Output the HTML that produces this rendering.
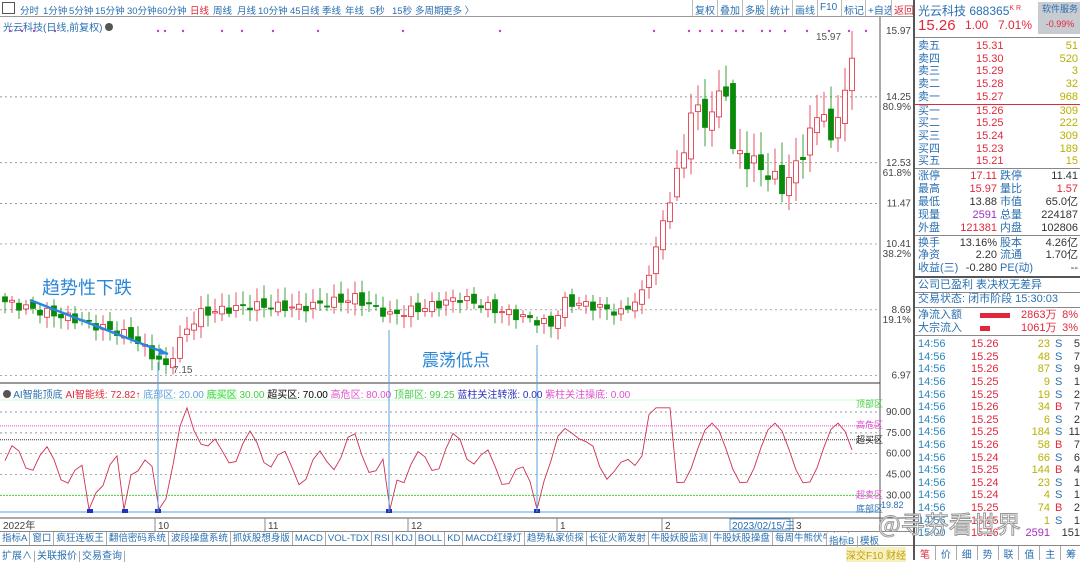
<!DOCTYPE html>
<html><head><meta charset="utf-8"><style>
*{margin:0;padding:0;box-sizing:border-box}
body{width:1080px;height:560px;overflow:hidden;background:#fff;font-family:"Liberation Sans","Noto Sans CJK SC",sans-serif;font-size:11px;position:relative}
.abs{position:absolute;white-space:nowrap}
#tb{position:absolute;left:0;top:0;width:913px;height:17px;border-bottom:1px solid #999;background:#fff;overflow:hidden}
#tb span{position:absolute;top:3px;color:#2a6fb0;font-size:9.5px}
.btn{position:absolute;top:0;height:17px;border-left:1px solid #bbb;color:#2a6fb0;font-size:10px;padding:2px 2px;white-space:nowrap}
#rp{position:absolute;left:913px;top:0;width:167px;height:560px;border-left:2px solid #555;font-size:11px}
.r{position:absolute;left:3px;right:0;height:13px;line-height:13px;white-space:nowrap}
.r b{font-weight:normal;position:absolute}
.hl{position:absolute;left:0;right:0;height:1px;background:#888}
#bt{position:absolute;left:0;top:531px;width:913px;height:15px;border-top:1px solid #888;border-bottom:1px solid #888;white-space:nowrap;overflow:hidden}
#bt span{display:inline-block;height:13px;line-height:13px;padding:0 2px;border-right:1px solid #aaa;color:#2a6fb0;font-size:9.5px}
</style></head><body>
<div id="tb">
<div style="position:absolute;left:2px;top:2px;width:13px;height:12px;border:1px solid #555"></div>
<span style="left:20px">分时</span><span style="left:43px">1分钟</span><span style="left:69px">5分钟</span><span style="left:95px">15分钟</span><span style="left:127px">30分钟</span><span style="left:157px">60分钟</span><span style="left:190px;color:#e0283c">日线</span><span style="left:213px">周线</span><span style="left:237px">月线</span><span style="left:258px">10分钟</span><span style="left:290px">45日线</span><span style="left:322px">季线</span><span style="left:345px">年线</span><span style="left:370px">5秒</span><span style="left:392px">15秒</span><span style="left:415px">多周期</span><span style="left:443px">更多 〉</span>
<div class="btn" style="left:692px">复权</div><div class="btn" style="left:717px">叠加</div><div class="btn" style="left:742px">多股</div><div class="btn" style="left:767px">统计</div><div class="btn" style="left:792px">画线</div><div class="btn" style="left:817px">F10</div><div class="btn" style="left:841px">标记</div><div class="btn" style="left:865px">+自选</div><div class="btn" style="left:891px;color:#e0283c;background:#fff">返回</div>
</div>
<div class="abs" style="left:3px;top:19px;color:#2a6fb0;font-size:10px">光云科技(日线,前复权) <span style="display:inline-block;width:8px;height:8px;border-radius:50%;background:#555"></span></div>
<svg id="sv" width="913" height="531" style="position:absolute;left:0;top:0"></svg>
<div class="abs" style="left:42px;top:274px;color:#2a86d8;font-size:18px">趋势性下跌</div>
<div class="abs" style="left:422px;top:346px;color:#2a86d8;font-size:17px">震荡低点</div>
<div class="abs" style="left:3px;top:386px;font-size:10px"><span style="display:inline-block;width:8px;height:8px;border-radius:50%;background:#555"></span> <span style="color:#2a6fb0">AI智能顶底</span> <span style="color:#e0283c">AI智能线: 72.82↑</span> <span style="color:#5aa0e0">底部区: 20.00</span> <span style="color:#4c4;background:#dfd">底买区</span> <span style="color:#4c4">30.00</span> 超买区: 70.00 <span style="color:#e050d0">高危区: 80.00</span> <span style="color:#4c4">顶部区: 99.25</span> <span style="color:#3030c0">蓝柱关注转涨: 0.00</span> <span style="color:#e050d0">紫柱关注操底: 0.00</span></div>
<div id="bt"><span>指标A</span><span>窗口</span><span>疯狂连板王</span><span>翻倍密码系统</span><span>波段操盘系统</span><span>抓妖股想身版</span><span>MACD</span><span>VOL-TDX</span><span>RSI</span><span>KDJ</span><span>BOLL</span><span>KD</span><span>MACD红绿灯</span><span>趋势私家侦探</span><span>长征火箭发射</span><span>牛股妖股监测</span><span>牛股妖股操盘</span><span>每周牛熊伏牛</span><span>〉</span></div>
<div class="abs" style="left:826px;top:533px;font-size:9.5px;color:#2a6fb0;background:#fff;width:87px;height:12px;border-left:1px solid #aaa;padding-left:2px">指标B <span style="border-left:1px solid #aaa;padding:0 2px">模板</span></div>
<div class="abs" style="left:0;top:547px;width:913px;height:13px;font-size:10px;color:#2a6fb0"><span style="border-right:1px solid #aaa;padding:0 2px">扩展∧</span><span style="border-right:1px solid #aaa;padding:0 2px">关联报价</span><span style="border-right:1px solid #aaa;padding:0 2px">交易查询</span><span style="position:absolute;left:846px;background:#f4f0c0;color:#c8a000">深交F10 财经</span></div>
<div id="rp">
<div class="r" style="top:2px;font-size:12px;color:#2a6fb0">光云科技 688365<sup style="color:#e0283c;font-size:7px">K R</sup></div>
<div style="position:absolute;left:123px;top:2px;width:44px;height:32px;background:#c8ccd0;color:#2a6fb0;font-size:9px;text-align:center;line-height:15px">软件服务<br><span style="color:#e0283c">-0.99%</span></div>
<div class="r" style="top:19px;height:16px;font-size:14px;color:#e0283c"><b style="left:0;font-size:15px">15.26</b><b style="left:47px;font-size:12px">1.00</b><b style="left:80px;font-size:12px">7.01%</b></div>
<div class="hl" style="top:37px"></div>
<div id="ob"></div>
</div>
<script>
var sv=document.getElementById('sv'),h='';
function Y(p){return 31+(15.97-p)*38.3}
function IY(v){return 412+(90-v)*1.39}
[[14.25,'14.25','80.9%'],[12.53,'12.53','61.8%'],[11.47,'11.47',''],[10.41,'10.41','38.2%'],[8.69,'8.69','19.1%'],[6.97,'6.97','']].forEach(function(g){var y=Y(g[0]);h+='<line x1="0" x2="880" y1="'+y+'" y2="'+y+'" stroke="#777" stroke-dasharray="2,3" stroke-width="0.7"/>';h+='<text x="911" y="'+(y+3)+'" text-anchor="end" font-size="10" fill="#444">'+g[1]+'</text>';if(g[2])h+='<text x="911" y="'+(y+13)+'" text-anchor="end" font-size="10" fill="#444">'+g[2]+'</text>';});
h+='<text x="911" y="34" text-anchor="end" font-size="10" fill="#444">15.97</text>';
h+='<line x1="880" y1="17" x2="880" y2="531" stroke="#555"/>';
h+='<line x1="0" y1="383" x2="880" y2="383" stroke="#333"/>';
h+='<line x1="0" y1="518" x2="913" y2="518" stroke="#555"/>';
[10,22,34,55,158,165,183,222,242,273,318,403,500,654,689,700,712,722,736,743,762,770,785,807,829,849,866].forEach(function(x){h+='<circle cx="'+x+'" cy="31" r="1.2" fill="#c040c0"/>'});
var K=[[0,8.9],[4,8.7],[10,8.45],[18,8.0],[23,7.2],[26,8.2],[28,8.6],[35,8.8],[42,8.75],[50,9.0],[55,8.55],[60,8.75],[65,9.0],[70,8.7],[75,8.45],[78,8.3],[80,8.9],[84,8.8],[88,8.6],[91,9.1],[93,10.3],[95,11.6],[97,12.8],[98,14.0],[100,13.6],[103,14.5],[104,12.9],[106,12.6],[108,12.4],[111,11.9],[113,12.4],[115,13.3],[117,14.0],[118,12.9],[119,13.8],[121,15.26]];
function lerp(i){for(var k=0;k<K.length-1;k++){if(i>=K[k][0]&&i<=K[k+1][0]){var t=(i-K[k][0])/(K[k+1][0]-K[k][0]);return K[k][1]+t*(K[k+1][1]-K[k][1]);}}return 15.26}
var s=7,prev=8.95;
for(var i=0;i<=121;i++){var m=i>95?2:1;var c=lerp(i)+Math.sin(i*2.3)*0.12*m;if(i==121)c=15.26;var o=prev+Math.cos(i*1.7)*0.08*m;
var hi=Math.max(o,c)+0.1+Math.abs(Math.sin(i*3.1))*0.25*m,lo=Math.min(o,c)-0.1-Math.abs(Math.cos(i*2.7))*0.2*m;
if(i==104){o=14.6;c=12.9;hi=14.7}if(i==121)hi=15.97;
var x=5+i*s,up=c>=o,col=up?'#e0283c':'#0a8a0a';
h+='<line x1="'+x+'" x2="'+x+'" y1="'+Y(hi)+'" y2="'+Y(lo)+'" stroke="'+col+'" stroke-width="0.8"/>';
var t=Y(Math.max(o,c)),bh=Math.max(1,Math.abs(Y(o)-Y(c)));
h+='<rect x="'+(x-2.5)+'" y="'+t+'" width="5" height="'+bh+'" fill="'+(up?'#fff':'#0a8a0a')+'" stroke="'+col+'" stroke-width="0.8"/>';
prev=c;}
h+='<line x1="30" y1="300" x2="168" y2="354" stroke="#2a86e0" stroke-width="2.5"/><polygon points="168,354 160,348 158,355" fill="#2a86e0"/>';
h+='<text x="173" y="373" font-size="10" fill="#555">7.15</text><text x="816" y="40" font-size="10" fill="#555">15.97</text>';
[90,75,60,45].forEach(function(v){h+='<line x1="0" x2="880" y1="'+IY(v)+'" y2="'+IY(v)+'" stroke="#777" stroke-dasharray="2,3" stroke-width="0.7"/><text x="911" y="'+(IY(v)+3)+'" text-anchor="end" font-size="10" fill="#444">'+v+'.00</text>'});
h+='<text x="911" y="'+(IY(30)+3)+'" text-anchor="end" font-size="10" fill="#444">30.00</text>';
h+='<line x1="0" x2="880" y1="'+IY(80)+'" y2="'+IY(80)+'" stroke="#e050d0" stroke-dasharray="1,1"/>';
h+='<line x1="0" x2="880" y1="'+IY(70)+'" y2="'+IY(70)+'" stroke="#333" stroke-dasharray="1,1"/>';
h+='<line x1="0" x2="880" y1="'+IY(30)+'" y2="'+IY(30)+'" stroke="#4c4" stroke-dasharray="2,1"/>';
h+='<line x1="0" x2="880" y1="400" y2="400" stroke="#cfc"/><line x1="0" x2="880" y1="512" y2="512" stroke="#5aa0e0"/>';
h+='<text x="856" y="407" font-size="9" fill="#4c4">顶部区</text><text x="856" y="428" font-size="9" fill="#e050d0">高危区</text><text x="856" y="443" font-size="9" fill="#222">超买区</text><text x="856" y="498" font-size="9" fill="#e050d0">超卖区</text><text x="856" y="512" font-size="9" fill="#2a6fb0">底部区</text><text x="881" y="508" font-size="9" fill="#2a6fb0">19.82</text>';
var pts=[];for(var i=0;i<=121;i++){var d=(i>0?lerp(i)-lerp(i-3>0?i-3:0):0);var val=55+d*40+Math.sin(i*1.3)*10+Math.sin(i*0.4)*8;if(i>95)val=60+Math.sin(i*0.7)*22;val=Math.max(20,Math.min(93,val));if([12,17,22,55,76].indexOf(i)>=0)val=20;pts.push((5+i*s)+','+IY(val));}
h+='<polyline points="'+pts.join(' ')+'" fill="none" stroke="#d03050" stroke-width="0.9"/>';
[90,125,158,389,537].forEach(function(x){h+='<rect x="'+(x-3)+'" y="509" width="6" height="4" fill="#2030c0"/>'});
[158,389,537].forEach(function(x){h+='<line x1="'+x+'" x2="'+x+'" y1="'+(x==158?362:x==389?330:345)+'" y2="512" stroke="#5aa0e0"/>'});
h+='<text x="3" y="529" font-size="10" fill="#444">2022年</text>';
[[155,'10'],[265,'11'],[408,'12'],[557,'1'],[662,'2'],[793,'3']].forEach(function(d){h+='<line x1="'+d[0]+'" x2="'+d[0]+'" y1="518" y2="531" stroke="#888"/><text x="'+(d[0]+3)+'" y="529" font-size="10" fill="#444">'+d[1]+'</text>'});
h+='<rect x="730" y="519" width="60" height="11" fill="#fff" stroke="#5aa0e0"/><text x="732" y="529" font-size="10" fill="#2a6fb0">2023/02/15/三</text>';
sv.innerHTML=h;
var ob='',y=40;
function row(t,a,c){ob+='<div class="r" style="top:'+y+'px"><b style="left:0;color:#2a6fb0">'+t+'</b><b style="left:58px;color:#e0283c">'+a+'</b><b style="right:2px;color:#b8b000">'+c+'</b></div>';y+=12.7;}
[['卖五','15.31','51'],['卖四','15.30','520'],['卖三','15.29','3'],['卖二','15.28','32'],['卖一','15.27','968']].forEach(function(a){row(a[0],a[1],a[2])});
ob+='<div class="hl" style="top:'+(y)+'px;background:#e0283c"></div>';y+=1;
[['买一','15.26','309'],['买二','15.25','222'],['买三','15.24','309'],['买四','15.23','189'],['买五','15.21','15']].forEach(function(a){row(a[0],a[1],a[2])});
ob+='<div class="hl" style="top:'+y+'px"></div>';y+=2;
function st(a,b,c,d,cb,cd){ob+='<div class="r" style="top:'+y+'px"><b style="left:0;color:#2a6fb0">'+a+'</b><b style="left:24px;width:55px;text-align:right;color:'+cb+'">'+b+'</b><b style="left:82px;color:#2a6fb0">'+c+'</b><b style="right:2px;color:'+cd+'">'+d+'</b></div>';y+=12.9;}
st('涨停','17.11','跌停','11.41','#e0283c','#333');st('最高','15.97','量比','1.57','#e0283c','#e0283c');st('最低','13.88','市值','65.0亿','#333','#333');st('现量','2591','总量','224187','#a030c0','#333');st('外盘','121381','内盘','102806','#e0283c','#333');
ob+='<div class="hl" style="top:'+y+'px"></div>';y+=2;
st('换手','13.16%','股本','4.26亿','#333','#333');st('净资','2.20','流通','1.70亿','#333','#333');st('收益(三)','-0.280','PE(动)','--','#333','#333');
ob+='<div class="hl" style="top:'+(y+1)+'px;height:2px;background:#555"></div>';y+=4;
ob+='<div class="r" style="top:'+y+'px;color:#2a6fb0">公司已盈利 表决权无差异</div>';y+=13;ob+='<div class="hl" style="top:'+y+'px"></div>';y+=1;
ob+='<div class="r" style="top:'+y+'px;color:#2a6fb0">交易状态: 闭市阶段 15:30:03</div>';y+=14;ob+='<div class="hl" style="top:'+y+'px"></div>';y+=2;
ob+='<div class="r" style="top:'+y+'px"><b style="left:0;color:#2a6fb0">净流入额</b><b style="left:62px;top:4px;width:30px;height:5px;background:#e0283c"></b><b style="left:103px;color:#e0283c">2863万</b><b style="right:2px;color:#e0283c">8%</b></div>';y+=13;
ob+='<div class="r" style="top:'+y+'px"><b style="left:0;color:#2a6fb0">大宗流入</b><b style="left:62px;top:4px;width:10px;height:5px;background:#e0283c"></b><b style="left:103px;color:#e0283c">1061万</b><b style="right:2px;color:#e0283c">3%</b></div>';y+=13;
ob+='<div class="hl" style="top:'+y+'px"></div>';y+=3;
[['15.26','23','S','5'],['15.25','48','S','7'],['15.26','87','S','9'],['15.25','9','S','1'],['15.25','19','S','2'],['15.26','34','B','7'],['15.25','6','S','2'],['15.25','184','S','11'],['15.26','58','B','7'],['15.24','66','S','6'],['15.25','144','B','4'],['15.24','23','S','1'],['15.24','4','S','1'],['15.25','74','B','2'],['15.25','1','S','1'],['15.26','2591','','151']].forEach(function(a,k){ob+='<div class="r" style="top:'+y+'px"><b style="left:0;color:#2a86c0">'+(k==15?'15:00':'14:56')+'</b><b style="left:53px;color:#e0283c">'+a[0]+'</b><b style="left:100px;width:32px;text-align:right;color:'+(k==15?'#a030c0':'#b8b000')+'">'+a[1]+'</b><b style="left:137px;color:'+(a[2]=='B'?'#e0283c':'#2a6fb0')+'">'+a[2]+'</b><b style="right:0;color:#333">'+a[3]+'</b></div>';y+=12.6;});
ob+='<div class="hl" style="top:545px"></div>';
ob+='<div style="position:absolute;left:0;top:546px;width:167px;height:14px;font-size:10px;display:flex">'+['笔','价','细','势','联','值','主','筹'].map(function(t,k){return '<span style="flex:1;text-align:center;border-right:1px solid #aaa;color:'+(k==0?'#e0283c':'#2a6fb0')+'">'+t+'</span>'}).join('')+'</div>';
document.getElementById('ob').innerHTML=ob;
</script>
<div class="abs" style="left:878px;top:505px;font-size:24px;color:rgba(255,255,255,0.9);-webkit-text-stroke:1px #999;font-family:'Noto Sans CJK SC',sans-serif">@寻芬看世界</div>
</body></html>
